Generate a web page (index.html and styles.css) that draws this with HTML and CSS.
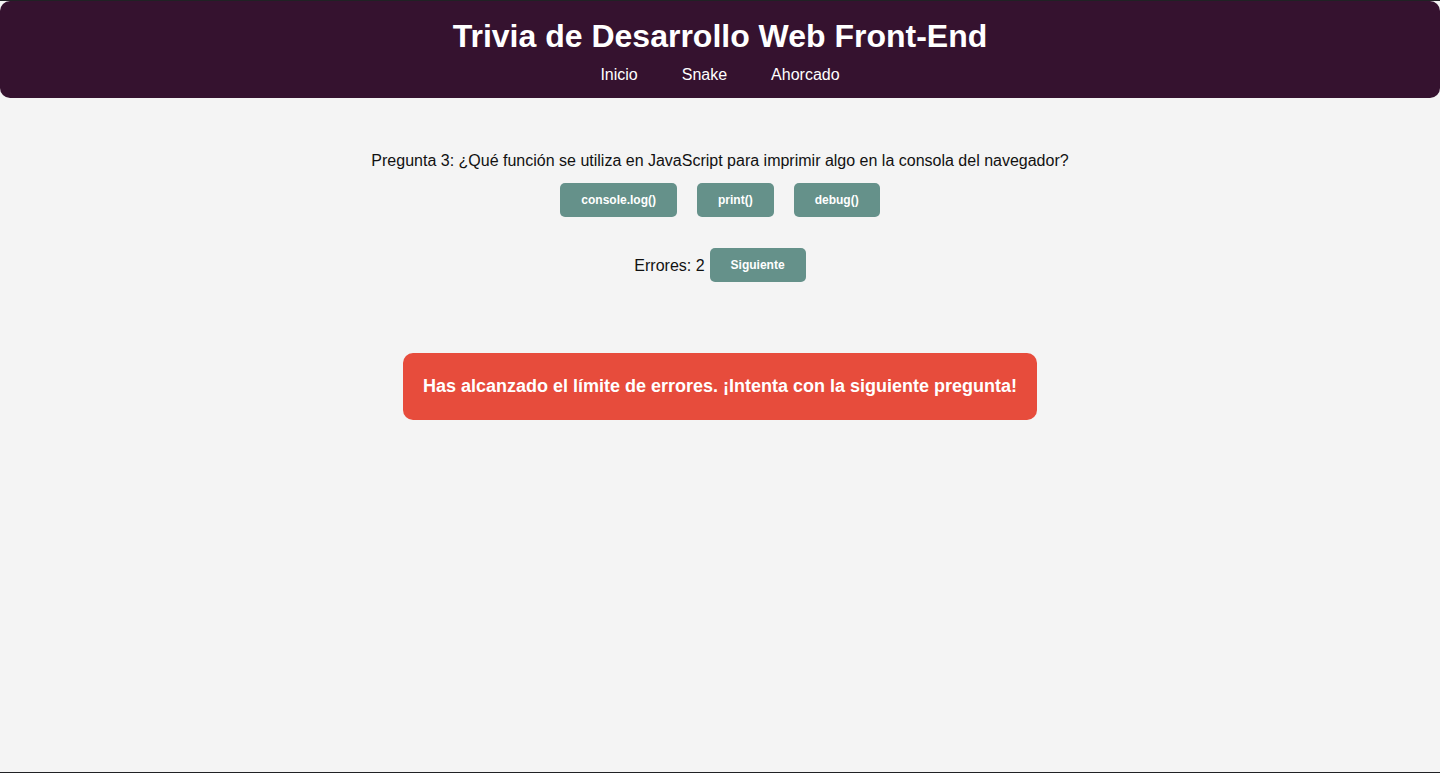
FILE: index.html
```html
<!DOCTYPE html>
<html lang="es">
<head>
<meta charset="utf-8">
<title>Trivia de Desarrollo Web Front-End</title>
<link rel="stylesheet" href="styles.css">
</head>
<body>
<header class="site-header">
  <h1 class="site-title">Trivia de Desarrollo Web Front-End</h1>
  <nav class="site-nav">
    <a href="#" class="nav-link">Inicio</a>
    <a href="#" class="nav-link">Snake</a>
    <a href="#" class="nav-link">Ahorcado</a>
  </nav>
</header>
<main class="trivia">
  <p class="question">Pregunta 3: ¿Qué función se utiliza en JavaScript para imprimir algo en la consola del navegador?</p>
  <div class="options">
    <button class="btn">console.log()</button>
    <button class="btn">print()</button>
    <button class="btn">debug()</button>
  </div>
  <div class="status">
    <span class="errors">Errores: 2</span>
    <button class="btn">Siguiente</button>
  </div>
  <div class="alert">Has alcanzado el límite de errores. ¡Intenta con la siguiente pregunta!</div>
</main>
</body>
</html>
```

FILE: styles.css
```css
* { box-sizing: border-box; }

html {
  border-top: 1px solid #202124;
  border-bottom: 1px solid #202124;
  min-height: 100vh;
  background: #f4f4f4;
}

body {
  margin: 0;
  font-family: "Liberation Sans", Arial, sans-serif;
  color: #111;
  background: #f4f4f4;
}

.site-header {
  background: #35122f;
  border-radius: 10px;
  padding: 17px 0 14px;
  text-align: center;
  color: #fff;
}

.site-title {
  margin: 0 0 10px;
  font-size: 32px;
  font-weight: bold;
  line-height: 37px;
}

.site-nav {
  display: flex;
  justify-content: center;
  gap: 44px;
  line-height: 19px;
}

.nav-link {
  color: #fff;
  text-decoration: none;
  font-size: 16px;
}

.trivia {
  display: flex;
  flex-direction: column;
  align-items: center;
  padding-top: 53px;
}

.question {
  margin: 0;
  font-size: 16px;
  line-height: 19px;
}

.options {
  display: flex;
  justify-content: center;
  gap: 20px;
  margin-top: 13px;
}

.btn {
  font-family: "Liberation Sans", Arial, sans-serif;
  font-size: 12px;
  font-weight: bold;
  line-height: 14px;
  height: 34px;
  color: #fff;
  background: #65918a;
  border: none;
  border-radius: 5px;
  padding: 10px 21px;
  cursor: pointer;
}

.status {
  display: flex;
  align-items: center;
  gap: 5px;
  margin-top: 31px;
  font-size: 16px;
}

.errors {
  padding-top: 2px;
}

.alert {
  margin-top: 71px;
  background: #e74c3c;
  color: #fff;
  font-size: 18px;
  font-weight: bold;
  line-height: 27px;
  height: 67px;
  padding: 20px;
  border-radius: 10px;
}
```
